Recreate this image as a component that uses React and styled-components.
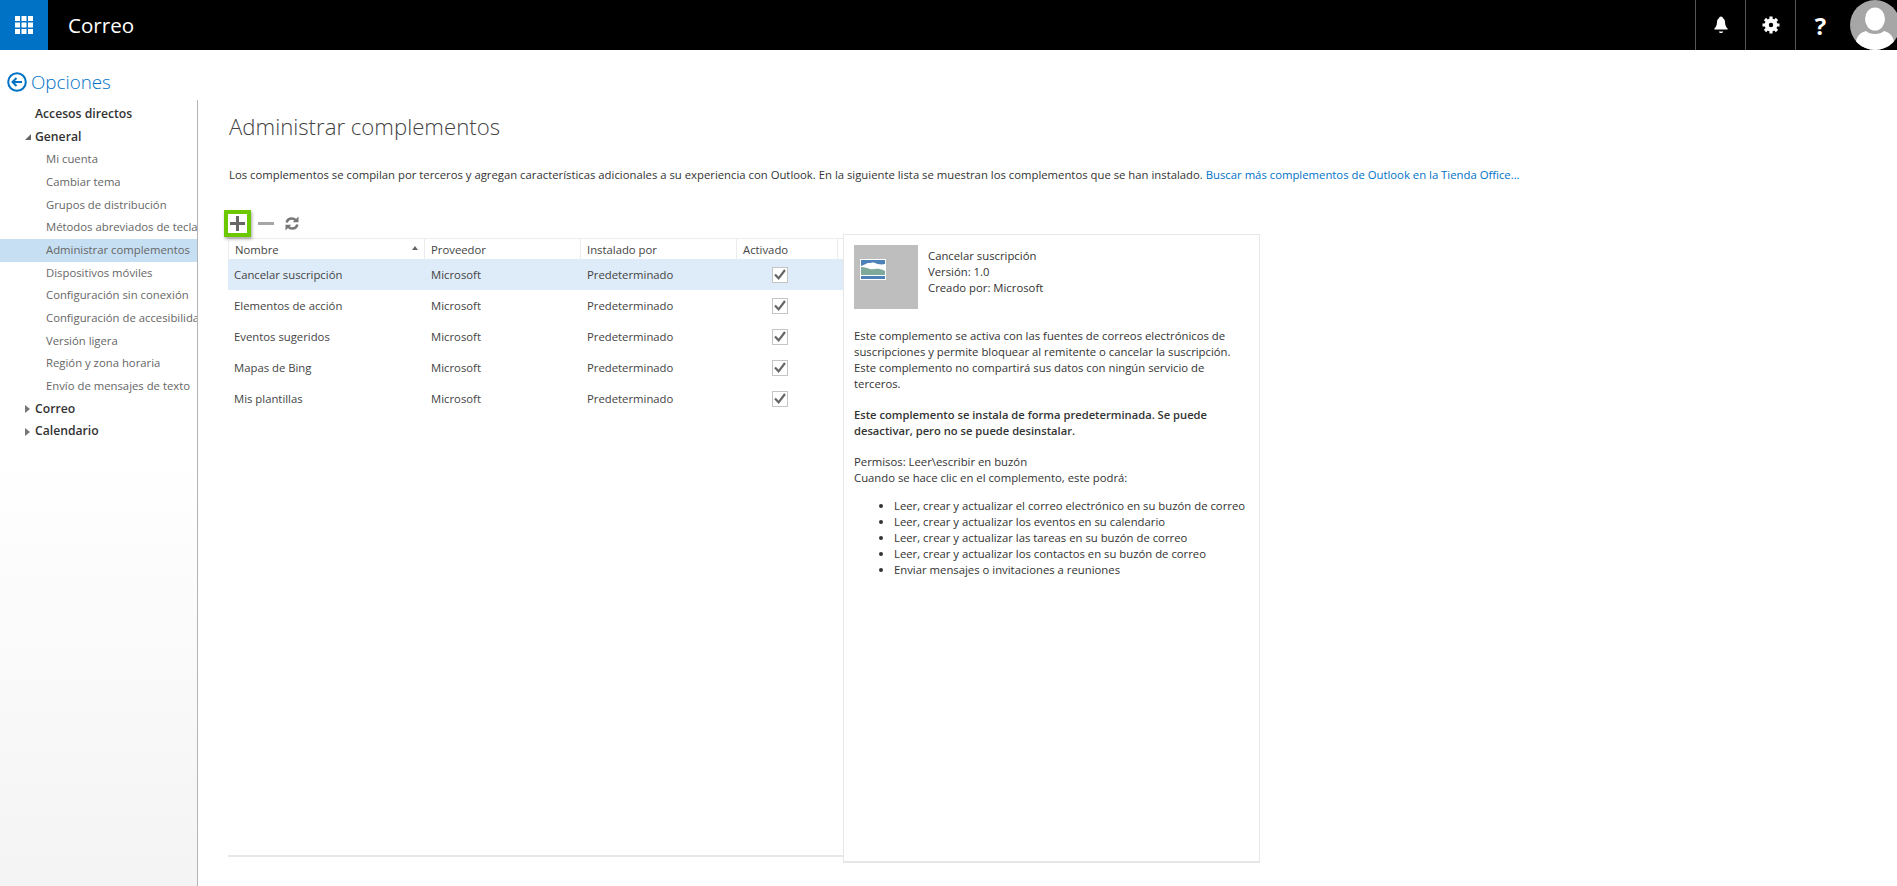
import React from 'react'
import styled, { createGlobalStyle } from 'styled-components'

const GlobalStyle = createGlobalStyle`
  html, body {
    margin: 0;
    padding: 0;
    background: #fff;
    overflow: hidden;
  }
  * { box-sizing: border-box; }
`

const font = `"Open Sans", "Noto Sans", Arial, sans-serif`

const Page = styled.div`
  width: 1897px;
  height: 886px;
  display: flex;
  flex-direction: column;
  font-family: ${font};
  font-size: 11.32px;
  color: #333;
  overflow: hidden;
`

const TopBar = styled.header`
  height: 50px;
  flex: none;
  background: #000;
  display: flex;
  align-items: stretch;
  color: #fff;
`

const AppTile = styled.div`
  width: 48px;
  background: #0072c6;
  display: grid;
  place-items: center;
`

const AppName = styled.div`
  margin-left: 20px;
  font-size: 20.6px;
  line-height: 50px;
  flex: 1;
`

const BarButton = styled.div`
  width: 50px;
  border-left: 1px solid #555;
  display: grid;
  place-items: center;
`

const HelpMark = styled(BarButton)`
  font-size: 24px;
  font-weight: 700;
`

const AvatarSlot = styled.div`
  width: 47px;
  margin-left: 5px;
  overflow: hidden;
  svg { display: block; }
`

const Body = styled.div`
  flex: 1;
  display: flex;
  min-height: 0;
`

const Side = styled.aside`
  width: 198px;
  flex: none;
  display: flex;
  flex-direction: column;
`

const BackLink = styled.div`
  height: 50px;
  padding: 19px 0 0 7px;
  display: flex;
  align-items: flex-start;
  gap: 4px;
  color: #0072c6;
  font-size: 18.8px;
  font-weight: 300;
  line-height: 26px;
  svg { margin-top: 3px; flex: none; }
`

const Nav = styled.nav`
  flex: 1;
  padding-top: 3px;
  border-right: 1px solid #b4b4b4;
  background: linear-gradient(#fff 0%, #fff 45%, #f4f4f4 100%);
`

const NavItem = styled.div`
  height: 22.66px;
  line-height: 22.66px;
  white-space: nowrap;
  overflow: hidden;
  display: flex;
  align-items: center;
  padding-left: ${p => (p.$sub ? 46 : 35)}px;
  color: ${p => (p.$sub ? '#666' : '#333')};
  font-size: ${p => (p.$sub ? 11.32 : 12.2)}px;
  font-weight: ${p => (p.$sub ? 400 : 600)};
  background: ${p => (p.$active ? '#c7dff3' : 'transparent')};
  position: relative;
`

const Arrow = styled.span`
  position: absolute;
  left: 25px;
  top: 50%;
  transform: translateY(-50%);
  display: flex;
`

const Main = styled.main`
  flex: 1;
  min-width: 0;
  padding: 62px 0 0 30px;
`

const Title = styled.h1`
  margin: 0 0 0 1px;
  font-size: 22.2px;
  line-height: 30px;
  font-weight: 300;
  color: #444;
`

const Intro = styled.p`
  margin: 25px 0 0 1px;
  line-height: 16px;
  color: #333;
  white-space: nowrap;
  a { color: #0072c6; text-decoration: none; }
`

const Workspace = styled.div`
  display: flex;
  align-items: flex-start;
`

const ListArea = styled.div`
  width: 615px;
  height: 674px;
  border-bottom: 2px solid #e8e8e8;
  flex: none;
`

const Toolbar = styled.div`
  display: flex;
  align-items: center;
  height: 27px;
  margin: 27px 0 0 -4px;
  gap: 7px;
`

const AddButton = styled.div`
  width: 27px;
  height: 27px;
  border: 4px solid #6cc800;
  box-shadow: 1px 2px 3px rgba(0, 0, 0, 0.35);
  display: grid;
  place-items: center;
  background: #fff;
`

const ToolIcon = styled.div`
  display: grid;
  place-items: center;
  margin-right: ${p => p.$gap || 0}px;
`

const Row = styled.div`
  display: grid;
  grid-template-columns: 197px 156px 156px 101px 5px;
  align-items: center;
  height: 31px;
  background: ${p => (p.$selected ? '#deebf8' : 'transparent')};
`

const HeadRow = styled(Row)`
  height: 21px;
  margin-top: 1px;
  border-top: 1px solid #ececec;
`

const HeadCell = styled.div`
  height: 100%;
  padding: 1px 6px 0;
  line-height: 20px;
  color: #444;
  border-right: 1px solid #ececec;
  border-left: ${p => (p.$first ? '1px solid #ececec' : '0')};
  display: flex;
  justify-content: space-between;
  align-items: center;
`

const Cell = styled.div`
  padding-left: 6px;
  color: #444;
  white-space: nowrap;
`

const CheckCell = styled.div`
  display: flex;
  padding-left: 35px;
`

const CheckBox = styled.div`
  width: 16px;
  height: 16px;
  border: 1px solid #c4c4c4;
  background: #fff;
  display: grid;
  place-items: center;
`

const Details = styled.section`
  width: 417px;
  height: 629px;
  margin-top: 51px;
  flex: none;
  border: 1px solid #e6e6e6;
  border-bottom-width: 2px;
  background: #fff;
  padding: 10px;
  line-height: 16px;
  color: #333;
`

const Summary = styled.div`
  display: flex;
  gap: 10px;
`

const Thumb = styled.div`
  width: 64px;
  height: 64px;
  background: #bebebe;
  display: flex;
  align-items: flex-start;
  padding: 14px 0 0 6px;
`

const SummaryText = styled.div`
  padding-top: 3px;
`

const Para = styled.p`
  margin: 15px 0 0;
  font-weight: ${p => (p.$bold ? 600 : 400)};
  font-size: ${p => (p.$bold ? 11.2 : 11.32)}px;
  &:first-of-type { margin-top: 19px; }
`

const Perms = styled.ul`
  margin: 12px 0 0;
  padding-left: 40px;
`

const SortIcon = styled.svg`
  margin-top: -5px;
`

const Waffle = () => (
  <svg width="18" height="18" viewBox="0 0 18 18" fill="#fff">
    {[0, 6.5, 13].flatMap(x => [0, 6.5, 13].map(y => (
      <rect key={`${x}-${y}`} x={x} y={y} width="5" height="5" />
    )))}
  </svg>
)

const Bell = () => (
  <svg width="16" height="18" viewBox="0 0 16 18" fill="#fff">
    <path d="M8 0.5c1.1 0 1.8.8 2 1.7 1.4.7 1.9 2 2 3.8.1 3 .8 5 2.6 6.4v1H1.4v-1C3.2 11 3.9 9 4 6c.1-1.8.6-3.1 2-3.8.2-.9.9-1.7 2-1.7z" />
    <path d="M5.8 15.500h4.400c-.3 1-1.200 1.600-2.200 1.600s-1.900-.6-2.200-1.600z" />
  </svg>
)

const Gear = () => (
  <svg width="18" height="18" viewBox="0 0 18 18">
    <circle cx="9" cy="9" r="4.300" fill="none" stroke="#fff" strokeWidth="4.200" />
    <path d="M9 0.500v3M9 14.500v3M0.500 9h3M14.500 9h3M3 3l2.100 2.100M12.900 12.900L15 15M15 3l-2.100 2.100M5.100 12.900L3 15" stroke="#fff" strokeWidth="3.200" />
  </svg>
)

const Avatar = () => (
  <svg width="50" height="50" viewBox="0 0 50 50">
    <defs>
      <clipPath id="avatarClip"><circle cx="25" cy="25" r="25" /></clipPath>
    </defs>
    <circle cx="25" cy="25" r="25" fill="#a6a6a6" />
    <g clipPath="url(#avatarClip)" fill="#fff">
      <ellipse cx="25" cy="19" rx="10" ry="11.500" />
      <path d="M5 50c0-11 3-17 11-19 2 2 5 3 9 3s7-1 9-3c8 2 11 8 11 19z" />
    </g>
  </svg>
)

const BackIcon = () => (
  <svg width="20" height="20" viewBox="0 0 20 20" fill="none" stroke="#0072c6">
    <circle cx="10" cy="10" r="8.800" strokeWidth="2" />
    <path d="M15 10H6M9.500 6L5.500 10l4 4" strokeWidth="2" />
  </svg>
)

const ArrowDown = () => (
  <svg width="6" height="6" viewBox="0 0 6 6"><path d="M6 0v6H0z" fill="#666" /></svg>
)

const ArrowRight = () => (
  <svg width="5" height="8" viewBox="0 0 5 8"><path d="M0 0l5 4-5 4z" fill="#777" /></svg>
)

const Plus = () => (
  <svg width="15" height="15" viewBox="0 0 15 15">
    <path d="M7.500 0v15M0 7.500h15" stroke="#666" strokeWidth="3" />
  </svg>
)

const Minus = () => (
  <svg width="16" height="15" viewBox="0 0 16 15">
    <path d="M0 7.500h16" stroke="#a6a6a6" strokeWidth="3" />
  </svg>
)

const Refresh = () => (
  <svg width="14" height="15" viewBox="0 0 14 14" fill="none">
    <path d="M1.700 6C2.200 3.600 4.200 2 6.800 2c1.600 0 2.900.6 3.900 1.700" stroke="#777" strokeWidth="2.600" />
    <path d="M13.500 0v5.800H7.700z" fill="#777" />
    <path d="M12.300 8c-.5 2.400-2.500 4-5.100 4-1.600 0-2.900-.6-3.900-1.700" stroke="#777" strokeWidth="2.600" />
    <path d="M0.500 14V8.200H6.300z" fill="#777" />
  </svg>
)

const SortUp = () => (
  <SortIcon width="6" height="4" viewBox="0 0 6 4"><path d="M3 0l3 4H0z" fill="#666" /></SortIcon>
)

const Check = () => (
  <svg width="12" height="11" viewBox="0 0 12 11" fill="none">
    <path d="M1 5.500l3.600 3.800L11 1" stroke="#666" strokeWidth="2.200" />
  </svg>
)

const Landscape = () => (
  <svg width="26" height="21" viewBox="0 0 26 21">
    <rect width="26" height="21" fill="#fff" />
    <rect x="1" y="1" width="24" height="7" fill="#4d82b8" />
    <path d="M1 7c4-1 5-3 8-3s4-1 6 0 6 2 10 1v4H1z" fill="#fff" />
    <path d="M1 8c4 0 6 1 9 2 4 1 7-2 15 2v4H1z" fill="#7fa99b" />
    <rect x="1" y="17" width="24" height="3" fill="#4d82b8" />
  </svg>
)

const subItems = [
  'Mi cuenta',
  'Cambiar tema',
  'Grupos de distribución',
  'Métodos abreviados de teclado',
  'Administrar complementos',
  'Dispositivos móviles',
  'Configuración sin conexión',
  'Configuración de accesibilidad',
  'Versión ligera',
  'Región y zona horaria',
  'Envío de mensajes de texto',
]

const addins = ['Cancelar suscripción', 'Elementos de acción', 'Eventos sugeridos', 'Mapas de Bing', 'Mis plantillas']

const permissions = [
  'Leer, crear y actualizar el correo electrónico en su buzón de correo',
  'Leer, crear y actualizar los eventos en su calendario',
  'Leer, crear y actualizar las tareas en su buzón de correo',
  'Leer, crear y actualizar los contactos en su buzón de correo',
  'Enviar mensajes o invitaciones a reuniones',
]

export default function App() {
  return (
    <Page>
      <GlobalStyle />
      <TopBar>
        <AppTile><Waffle /></AppTile>
        <AppName>Correo</AppName>
        <BarButton><Bell /></BarButton>
        <BarButton><Gear /></BarButton>
        <HelpMark>?</HelpMark>
        <AvatarSlot><Avatar /></AvatarSlot>
      </TopBar>
      <Body>
        <Side>
          <BackLink><BackIcon />Opciones</BackLink>
          <Nav>
            <NavItem>Accesos directos</NavItem>
            <NavItem><Arrow><ArrowDown /></Arrow>General</NavItem>
            {subItems.map(item => (
              <NavItem key={item} $sub $active={item === 'Administrar complementos'}>{item}</NavItem>
            ))}
            <NavItem><Arrow><ArrowRight /></Arrow>Correo</NavItem>
            <NavItem><Arrow><ArrowRight /></Arrow>Calendario</NavItem>
          </Nav>
        </Side>
        <Main>
          <Title>Administrar complementos</Title>
          <Intro>
            Los complementos se compilan por terceros y agregan características adicionales a su experiencia con Outlook. En la siguiente lista se muestran los complementos que se han instalado. <a href="#tienda">Buscar más complementos de Outlook en la Tienda Office...</a>
          </Intro>
          <Workspace>
            <ListArea>
              <Toolbar>
                <AddButton><Plus /></AddButton>
                <ToolIcon $gap={4}><Minus /></ToolIcon>
                <ToolIcon><Refresh /></ToolIcon>
              </Toolbar>
              <HeadRow>
                <HeadCell $first>Nombre<SortUp /></HeadCell>
                <HeadCell>Proveedor</HeadCell>
                <HeadCell>Instalado por</HeadCell>
                <HeadCell>Activado</HeadCell>
              </HeadRow>
              {addins.map((name, i) => (
                <Row key={name} $selected={i === 0}>
                  <Cell>{name}</Cell>
                  <Cell>Microsoft</Cell>
                  <Cell>Predeterminado</Cell>
                  <CheckCell><CheckBox><Check /></CheckBox></CheckCell>
                </Row>
              ))}
            </ListArea>
            <Details>
              <Summary>
                <Thumb><Landscape /></Thumb>
                <SummaryText>
                  Cancelar suscripción<br />
                  Versión: 1.0<br />
                  Creado por: Microsoft
                </SummaryText>
              </Summary>
              <Para>
                Este complemento se activa con las fuentes de correos electrónicos de<br />
                suscripciones y permite bloquear al remitente o cancelar la suscripción.<br />
                Este complemento no compartirá sus datos con ningún servicio de<br />
                terceros.
              </Para>
              <Para $bold>
                Este complemento se instala de forma predeterminada. Se puede<br />
                desactivar, pero no se puede desinstalar.
              </Para>
              <Para>
                Permisos: Leer\escribir en buzón<br />
                Cuando se hace clic en el complemento, este podrá:
              </Para>
              <Perms>
                {permissions.map(p => <li key={p}>{p}</li>)}
              </Perms>
            </Details>
          </Workspace>
        </Main>
      </Body>
    </Page>
  )
}
